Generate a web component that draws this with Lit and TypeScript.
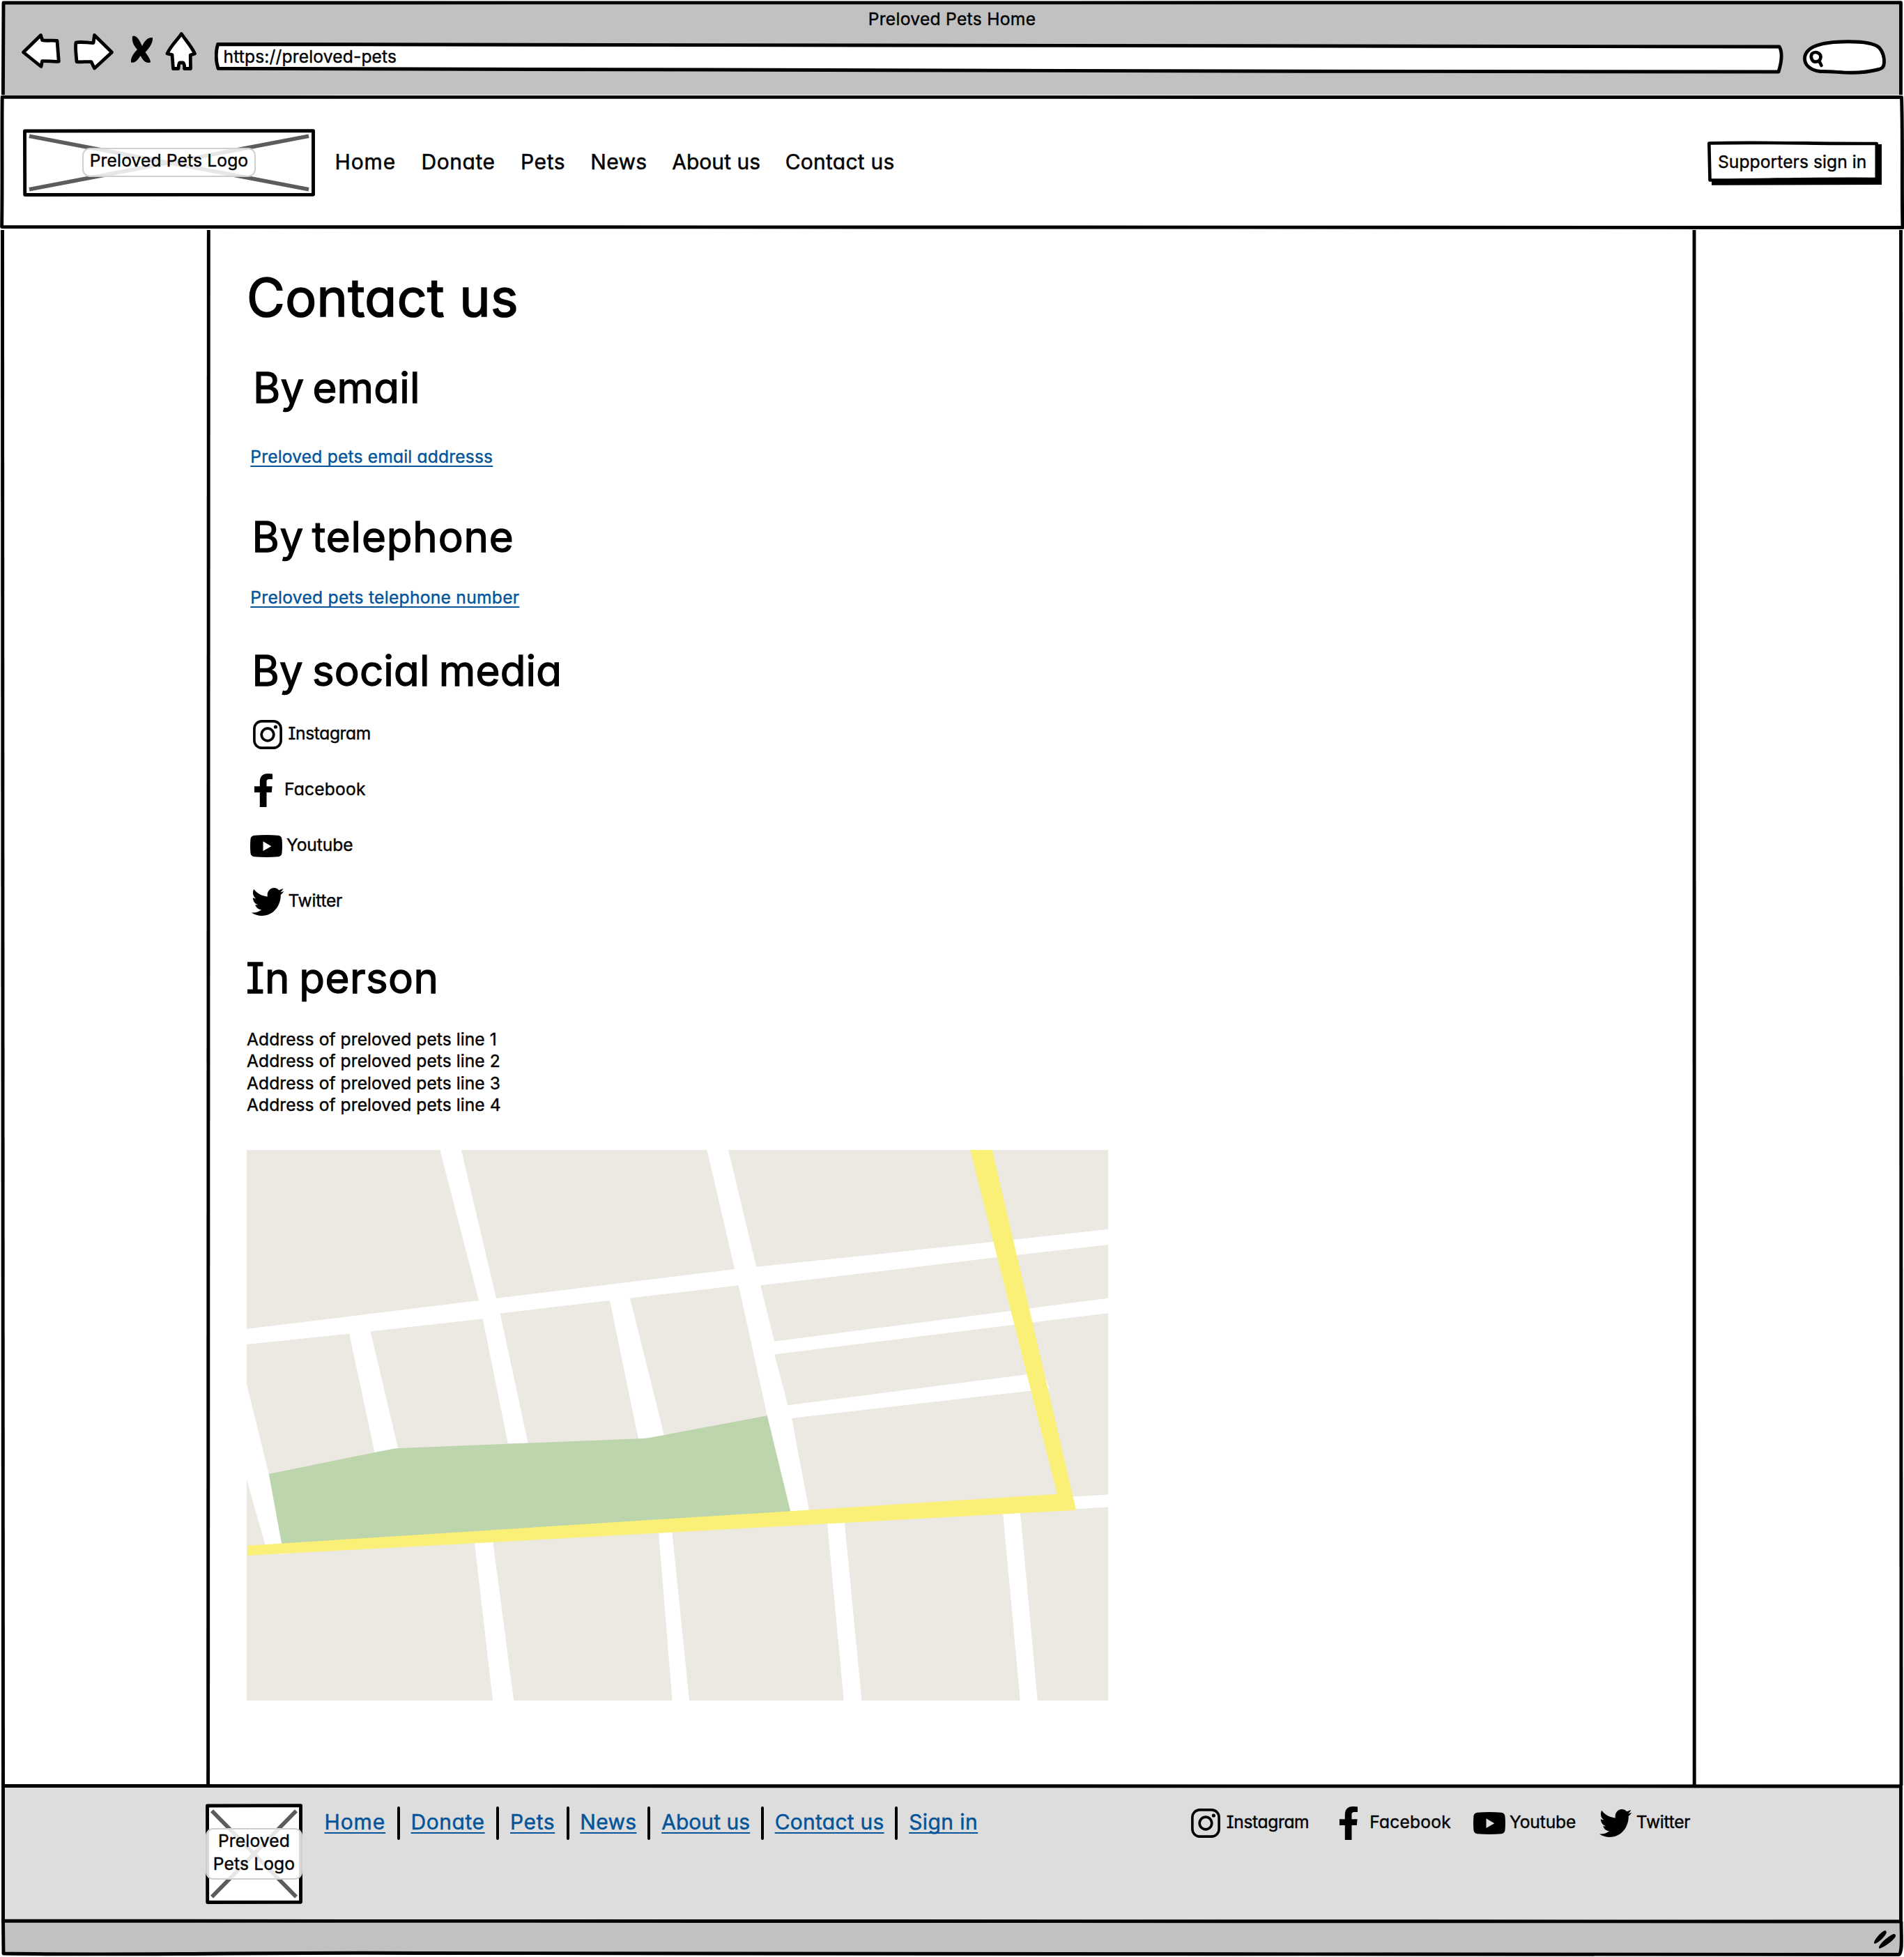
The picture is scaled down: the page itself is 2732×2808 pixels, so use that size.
import { LitElement, html, svg, css } from "lit";
import { customElement, property } from "lit/decorators.js";
import { styleMap } from "lit/directives/style-map.js";

/** A piece of text with its advance width and tracking (in em). */
interface Label {
  text: string;
  width: number;
  track: number;
}

const NAV: Label[] = [
  { text: "Home", width: 88.6, track: 0.03 },
  { text: "Donate", width: 106.9, track: 0.018 },
  { text: "Pets", width: 64.8, track: 0.02 },
  { text: "News", width: 81.4, track: 0.01 },
  { text: "About us", width: 127, track: 0.0016 },
  { text: "Contact us", width: 157, track: 0.008 },
];

const FOOTER_NAV: Label[] = [...NAV, { text: "Sign in", width: 99.2, track: 0.014 }];

const ADDRESS = [1, 2, 3, 4].map((n) => `Address of preloved pets line ${n}`);

const SOCIAL = [
  { kind: "instagram", text: "Instagram" },
  { kind: "facebook", text: "Facebook" },
  { kind: "youtube", text: "Youtube" },
  { kind: "twitter", text: "Twitter" },
];

const ICONS: Record<string, { w: number; h: number; box: string; art: unknown }> = {
  instagram: {
    w: 42,
    h: 42,
    box: "0 0 42 42",
    art: svg`<rect x="1.9" y="1.9" width="38.2" height="38.2" rx="10.5" fill="none" stroke="#000" stroke-width="3.6"/>
      <circle cx="21" cy="21" r="8.8" fill="none" stroke="#000" stroke-width="3.7"/>
      <circle cx="32.4" cy="10" r="2.6"/>`,
  },
  facebook: {
    w: 26,
    h: 48,
    box: "0 0 26 48",
    art: svg`<path d="M26 0.5V8H21.5C18.3 8 17.5 9.6 17.5 12V18.3H25.6L24.8 27H17.5V48H7.8V27H0V18.3H7.8V12C7.8 4 12 0 19 0C22 0 24.5 0.2 26 0.5Z"/>`,
  },
  youtube: {
    w: 46,
    h: 32,
    box: "0 0 46 32",
    art: svg`<path fill-rule="evenodd" d="M6 0.8C17 -0.2 29 -0.2 40 0.8C44 1.2 45.3 3.5 45.6 7C46.1 13 46.1 19 45.6 25C45.3 28.5 44 30.8 40 31.2C29 32.2 17 32.2 6 31.2C2 30.8 0.7 28.5 0.4 25C-0.1 19 -0.1 13 0.4 7C0.7 3.5 2 1.2 6 0.8ZM18.5 9.3V23L30.3 16.2Z"/>`,
  },
  twitter: {
    w: 46.5,
    h: 40,
    box: "0 48 512 416",
    art: svg`<path d="M459.37 151.716c.325 4.548.325 9.097.325 13.645 0 138.72-105.583 298.558-298.558 298.558-59.452 0-114.68-17.219-161.137-47.106 8.447.974 16.568 1.299 25.34 1.299 49.055 0 94.213-16.568 130.274-44.832-46.132-.975-84.792-31.188-98.112-72.772 6.498.974 12.995 1.624 19.818 1.624 9.421 0 18.843-1.3 27.614-3.573-48.081-9.747-84.143-51.98-84.143-102.985v-1.299c13.969 7.797 30.214 12.67 47.431 13.319-28.264-18.843-46.781-51.005-46.781-87.391 0-19.492 5.197-37.36 14.294-52.954 51.655 63.675 129.3 105.258 216.365 109.807-1.624-7.797-2.599-15.918-2.599-24.04 0-57.828 46.782-104.934 104.934-104.934 30.213 0 57.502 12.67 76.67 33.137 23.715-4.548 46.456-13.32 66.599-25.34-7.798 24.366-24.366 44.833-46.132 57.827 21.117-2.273 41.584-8.122 60.426-16.243-14.292 20.791-32.161 39.308-52.628 54.253z"/>`,
  },
};

/** Social network glyph followed by its name. */
@customElement("social-item")
export class SocialItem extends LitElement {
  @property() kind = "instagram";
  @property() label = "";

  static styles = css`
    :host {
      display: flex;
      align-items: center;
      height: 48px;
    }
    svg {
      display: block;
      flex: none;
    }
    span {
      white-space: nowrap;
      line-height: 32px;
      margin-bottom: 4px;
    }
    .row {
      display: flex;
      align-items: center;
    }
    .instagram {
      gap: 8.5px;
      letter-spacing: -0.015em;
    }
    .facebook {
      gap: 17px;
      letter-spacing: 0.008em;
    }
    .youtube {
      gap: 6px;
      letter-spacing: -0.004em;
    }
    .twitter {
      gap: 6px;
      letter-spacing: -0.01em;
    }
  `;

  render() {
    const icon = ICONS[this.kind];
    return html`<div class="row ${this.kind}">
      <svg width=${icon.w} height=${icon.h} viewBox=${icon.box} preserveAspectRatio="none">${icon.art}</svg>
      <span>${this.label}</span>
    </div>`;
  }
}

/** Crossed image placeholder with a translucent caption. */
@customElement("image-placeholder")
export class ImagePlaceholder extends LitElement {
  @property({ type: Number }) width = 100;
  @property({ type: Number }) height = 100;
  @property({ type: Number }) inset = 9;

  static styles = css`
    :host {
      display: grid;
      place-items: center;
      flex: none;
    }
    svg,
    .caption {
      grid-area: 1 / 1;
    }
    svg {
      display: block;
    }
    .caption {
      box-sizing: border-box;
      border: 2px solid #cfcfcf;
      border-radius: 11px;
      background: rgba(255, 255, 255, 0.85);
      padding: 0 8.5px 5px;
      line-height: 32.4px;
      text-align: center;
      white-space: nowrap;
      z-index: 1;
    }
  `;

  render() {
    const { width: w, height: h, inset: i } = this;
    const top = i + 1.3;
    return html`
      <svg width=${w} height=${h} viewBox="0 0 ${w} ${h}">
        <path d="M2.5 3L${w - 2.5} 2.6L${w - 2.5} ${h - 2.7}L2.7 ${h - 2.5}Z" fill="#fff" stroke="#000" stroke-width="4.9" />
        <path d="M${i} ${top}L${w - i} ${h - top}M${w - i} ${top}L${i} ${h - top}" stroke="#5c5c5e" stroke-width="5.7" />
      </svg>
      <div class="caption"><slot></slot></div>
    `;
  }
}

/** Street map: beige blocks, white streets, a park and a yellow main road. */
@customElement("street-map")
export class StreetMap extends LitElement {
  static styles = css`
    :host,
    svg {
      display: block;
    }
  `;

  render() {
    return html`<svg width="1236" height="790" viewBox="17.4 18.6 1538.6 1530" preserveAspectRatio="none">
      <rect x="17" y="18" width="1540" height="1532" fill="#ece9e2" />
      <g fill="#fff">
        <path d="M362.5 18H400.5L463 430L470 473L520 834H484L439 488L432 437Z" />
        <path d="M839.5 18H877.5L928 346L935 395L960 551V587L984 728L991 764L1022 1022H988L947 757L896 395L889 350Z" />
        <path d="M17 516L432 437L889 350L1352 274L1557 238.5V282L1358 317L935 395L896 395L665 437L470 473L439 488L200 529.5L17 559Z" />
        <path d="M200 525L238 520L288 850L246 860Z" />
        <path d="M665 430H702L763 812L717 822Z" />
        <path d="M955 551.5L1557 430.500V472L955 587.5Z" />
        <path d="M980 729L1412 642L1445 655L1451 682L988 764.5Z" />
        <path d="M17 668L57 919L80 1112L95 1140L55 1143L50 1114L17 932Z" />
        <path d="M1490 982L1557 976V1011L1490 1017Z" />
        <path d="M424 1105H457L494.5 1550H457Z" />
        <path d="M753 1078H777L808 1550H777.5Z" />
        <path d="M1054 1050H1085L1116 1550H1084Z" />
        <path d="M1368 1025H1399L1430 1550H1399Z" />
      </g>
      <path d="M57 919L246 859L283 848L732 820L947 757L989 1025L80 1114Z" fill="#bcd5ad" />
      <path d="M1309.5 18H1349L1499 1019.5L18 1146L20 1118L1465 975Z" fill="#faf077" />
    </svg>`;
  }
}

@customElement("app-root")
export class AppRoot extends LitElement {
  static styles = css`
    :host {
      display: block;
      position: relative;
      width: 2732px;
      height: 2808px;
      overflow: hidden;
      background: #fff;
      color: #000;
      font: 400 24.6px / 32px Inter, "Liberation Sans", sans-serif;
      font-feature-settings: "cv11", "cv08";
      letter-spacing: 0.006em;
      -webkit-text-stroke: 0.4px currentColor;
      stroke-linejoin: round;
    }
    .page {
      display: flex;
      flex-direction: column;
      height: 100%;
    }
    svg {
      display: block;
      flex: none;
    }
    h1,
    h2,
    p {
      margin: 0;
      font-weight: 400;
    }

    .chrome {
      margin: 3px 4px 0;
      height: 133px;
      background: #c1c1c1;
      display: flex;
      flex-direction: column;
      align-items: center;
    }
    .title {
      margin-top: 7.5px;
      letter-spacing: 0.012em;
    }
    .toolbar {
      align-self: stretch;
      display: flex;
      align-items: flex-start;
      padding-left: 26px;
      margin-top: 2.5px;
    }
    .tools {
      margin-right: 22px;
    }
    .address-bar {
      display: grid;
      align-items: center;
      margin-top: 13px;
    }
    .address-bar > * {
      grid-area: 1 / 1;
    }
    .address-bar span {
      padding-left: 12.5px;
      margin-bottom: 5px;
      z-index: 1;
    }
    .search {
      margin: 10px 0 0 24px;
    }

    .header {
      height: 194px;
      box-sizing: border-box;
      padding: 0 32px 0 33px;
      display: flex;
      align-items: center;
    }
    .nav {
      display: flex;
      align-items: center;
      gap: 35.5px;
      margin: 0 0 3px 28.5px;
      font-size: 30px;
      -webkit-text-stroke: 0.5px currentColor;
    }
    .nav span,
    .links a {
      white-space: nowrap;
      line-height: 40px;
    }
    .signin {
      margin: 2px 0 0 auto;
      display: grid;
      width: 250px;
      height: 64px;
    }
    .signin > * {
      grid-area: 1 / 1;
    }
    .signin span {
      z-index: 1;
      padding: 13.5px 0 0 15px;
      letter-spacing: 0.003em;
    }

    .content {
      box-sizing: border-box;
      height: 2230px;
      padding: 56.7px 0 0 354px;
      display: flex;
      flex-direction: column;
      align-items: flex-start;
    }
    h1 {
      font-size: 75px;
      line-height: 80px;
      letter-spacing: 0.005em;
      -webkit-text-stroke: 1.7px currentColor;
    }
    h2 {
      font-size: 60px;
      line-height: 64px;
      margin-left: 7.5px;
      -webkit-text-stroke: 1.3px currentColor;
    }
    .email-title {
      margin: 57px 0 0 9px;
      letter-spacing: 0.003em;
      word-spacing: -5px;
    }
    .phone-title {
      margin-top: 67.4px;
      letter-spacing: 0.014em;
      word-spacing: -6px;
    }
    .social-title {
      margin-top: 57.1px;
      letter-spacing: 0.003em;
      word-spacing: -4px;
    }
    .person-title {
      margin: 53px 0 0 -1px;
      letter-spacing: 0.008em;
      word-spacing: -4px;
    }
    .link {
      color: #04549a;
      margin-left: 5.3px;
      text-decoration: underline;
      text-decoration-thickness: 1.8px;
      text-underline-offset: 3.7px;
      text-decoration-skip-ink: none;
    }
    .email {
      margin-top: 50.9px;
      letter-spacing: 0.0073em;
    }
    .phone {
      margin-top: 38.9px;
      letter-spacing: 0.0112em;
    }
    .social {
      display: flex;
      flex-direction: column;
      gap: 32px;
      margin-top: 36.5px;
    }
    .social .instagram {
      margin-left: 9px;
    }
    .social .facebook {
      margin-left: 11px;
    }
    .social .youtube {
      margin-left: 5px;
    }
    .social .twitter {
      margin-left: 7px;
    }
    .address {
      margin: 40.2px 0 48px;
      line-height: 31.5px;
      letter-spacing: 0.0025em;
    }

    .footer {
      box-sizing: border-box;
      height: 197px;
      margin: 0 4px;
      padding: 28px 0 0 291px;
      background: #ddd;
      display: flex;
      align-items: flex-start;
    }
    .links {
      display: flex;
      align-items: center;
      height: 48px;
      margin: 4px 0 0 31.5px;
      gap: 15.75px;
      font-size: 30px;
      -webkit-text-stroke: 0.5px currentColor;
    }
    .links a {
      color: #04549a;
      text-decoration: underline;
      text-decoration-thickness: 2px;
      text-underline-offset: 4.4px;
      text-decoration-skip-ink: none;
      margin-bottom: 5px;
    }
    .sep {
      width: 4px;
      height: 48px;
      border-radius: 2px;
      background: #000;
    }
    .footer-social {
      display: flex;
      margin: 4px 0 0 306px;
    }
    .footer-social .facebook {
      margin-left: 44px;
    }
    .footer-social .youtube {
      margin-left: 32px;
    }
    .footer-social .twitter {
      margin-left: 34px;
    }
    .status {
      height: 47px;
      margin: 0 4px;
      background: #c1c1c1;
      display: flex;
      justify-content: flex-end;
      align-items: center;
    }
    .status svg {
      margin: 4px 4px 0 0;
    }
    .frame {
      position: absolute;
      inset: 0;
      z-index: 2;
      pointer-events: none;
    }
  `;

  private label = (l: Label) => styleMap({ width: `${l.width}px`, letterSpacing: `${l.track}em` });

  private social() {
    return SOCIAL.map((s) => html`<social-item class=${s.kind} kind=${s.kind} label=${s.text}></social-item>`);
  }

  /** Hand-drawn outlines of the window, its bands and the side columns. */
  private frame() {
    return html`<svg class="frame" width="2732" height="2808" viewBox="0 0 2732 2808" fill="none" stroke="#000" stroke-width="4.9">
      <path d="M4.4 136L5 4L2727.5 3.7V136" />
      <path d="M3.2 139.3C900 138.3 1800 141 2728.5 139.5C2730.5 200 2728.5 270 2730 326.5C1800 324.5 900 328 2.6 325.5C3.6 260 2.6 200 3.2 139.3Z" stroke-linejoin="round" />
      <path d="M3.500 330L4.5 2562" />
      <path d="M299.3 330L298.6 2562" />
      <path d="M2431 330L2431.2 2562" />
      <path d="M2727.5 330L2728 2562" />
      <path d="M4.5 2562.5C900 2562.3 1800 2564.500 2727.5 2563C2727 2640 2728 2700 2727.5 2757C1800 2755 900 2757.5 4.5 2756.2Z" stroke-linejoin="round" />
      <path d="M4.5 2756L5 2803C200 2806 350 2801 620 2802.5C1400 2805 2000 2803 2725 2804.5C2730 2800 2728 2780 2728 2757" stroke-linejoin="round" />
    </svg>`;
  }

  private tools() {
    return svg`<g fill="#fff" stroke="#000" stroke-width="4.8" stroke-linejoin="round">
      <path d="M33.5 75L58.5 50.5L60.7 57.7C68 59 75 57.5 82 58.5L84.3 88.2C76 89 68 87 60.5 87.7L59 95.5Z"/>
      <path d="M109 61C116 59.5 126 61.5 134 61.5L135.5 50.5L160.5 75L135.5 98L131 88.7C124 88 117 89.5 110 88.7C109.5 80 107.5 68 109 61Z"/>
      <path d="M260.3 48.5C266 57 275 67 279.5 77L273.2 79L273.5 98.5H264.5C265 94 264 90 262 90H258C256 91 256.5 95 256 98.5H248.5L247 78.5L240 77C245 65 255 57 260.3 48.5Z"/>
      </g>
      <path d="M190 52C194 50 198 54 201 60L204 66C207 60 211 53 219 54C220 62 213 70 208.5 75C212 80 216 85 216 89.5C211 91 207 89 204 84L201.5 80C198 85 195 91 188 89.5C187 82 193 75 197 71C191 65 189 58 190 52Z"/>`;
  }

  render() {
    return html`
      <div class="page">
        <header class="chrome">
          <div class="title">Preloved Pets Home</div>
          <div class="toolbar">
            <svg class="tools" width="256" height="60" viewBox="30 45 256 60">${this.tools()}</svg>
            <div class="address-bar">
              <svg width="2252" height="50" viewBox="308 58 2252 50">
                <path d="M312.5 63.5C1000 62.5 1700 65 2553 67C2558 75 2556 90 2552 103C1800 103.2 1000 99 313 98.3C309.5 87 309.5 74 312.5 63.5Z" fill="#fff" stroke="#000" stroke-width="4.9" stroke-linejoin="round" />
              </svg>
              <span>https://preloved-pets</span>
            </div>
            <svg class="search" width="124" height="56" viewBox="2584 55 124 56">
              <path d="M2612 102.5C2596 101 2589 92 2589.5 83C2591 67 2612 60 2650 59.8C2675 59.5 2690 63 2696 68C2702 74 2704 84 2703.5 90C2703 96 2701 98 2696 99.5C2682 103 2670 104.5 2655 104.3C2640 104 2625 102 2612 102.5Z" fill="#fff" stroke="#000" stroke-width="4.9" />
              <path d="M2600 77C2604 73.5 2610 75 2612 79C2613.5 84 2611 88 2606 88.5C2600 89.5 2597 82 2600 77ZM2610 87L2613.5 94" fill="none" stroke="#000" stroke-width="4.6" stroke-linecap="round" />
            </svg>
          </div>
        </header>

        <div class="header">
          <image-placeholder .width=${419} .height=${97} .inset=${9}>Preloved Pets Logo</image-placeholder>
          <nav class="nav">${NAV.map((l) => html`<span style=${this.label(l)}>${l.text}</span>`)}</nav>
          <div class="signin">
            <svg width="250" height="64" viewBox="2450 202 250 64">
              <path d="M2456 207H2700V265L2456 265.7Z" />
              <path d="M2452.3 205.5C2530 203.5 2610 206.5 2692.8 206V257C2610 256 2530 258.5 2453.5 258.5Z" fill="#fff" stroke="#000" stroke-width="4.6" />
            </svg>
            <span>Supporters sign in</span>
          </div>
        </div>

        <main class="content">
          <h1>Contact us</h1>
          <h2 class="email-title">By email</h2>
          <a class="link email">Preloved pets email addresss</a>
          <h2 class="phone-title">By telephone</h2>
          <a class="link phone">Preloved pets telephone number</a>
          <h2 class="social-title">By social media</h2>
          <div class="social">${this.social()}</div>
          <h2 class="person-title">In person</h2>
          <div class="address">${ADDRESS.map((a) => html`<p>${a}</p>`)}</div>
          <street-map></street-map>
        </main>

        <footer class="footer">
          <image-placeholder .width=${139} .height=${144} .inset=${9}>Preloved<br />Pets Logo</image-placeholder>
          <nav class="links">
            ${FOOTER_NAV.map((l, i) => html`${i ? html`<i class="sep"></i>` : ""}<a style=${this.label(l)}>${l.text}</a>`)}
          </nav>
          <div class="footer-social">${this.social()}</div>
        </footer>
        <div class="status">
          <svg width="36" height="30" viewBox="2688 2768 36 30">
            <path d="M2689 2788C2689 2783 2700 2771 2705 2770C2708 2771 2707 2774 2704 2778C2700 2783 2694 2788 2690 2789ZM2696 2795C2696 2789 2711 2777 2717 2775C2720 2775 2721 2777 2719 2780C2714 2787 2704 2793 2697 2796Z" />
          </svg>
        </div>
      </div>
      ${this.frame()}
    `;
  }
}
